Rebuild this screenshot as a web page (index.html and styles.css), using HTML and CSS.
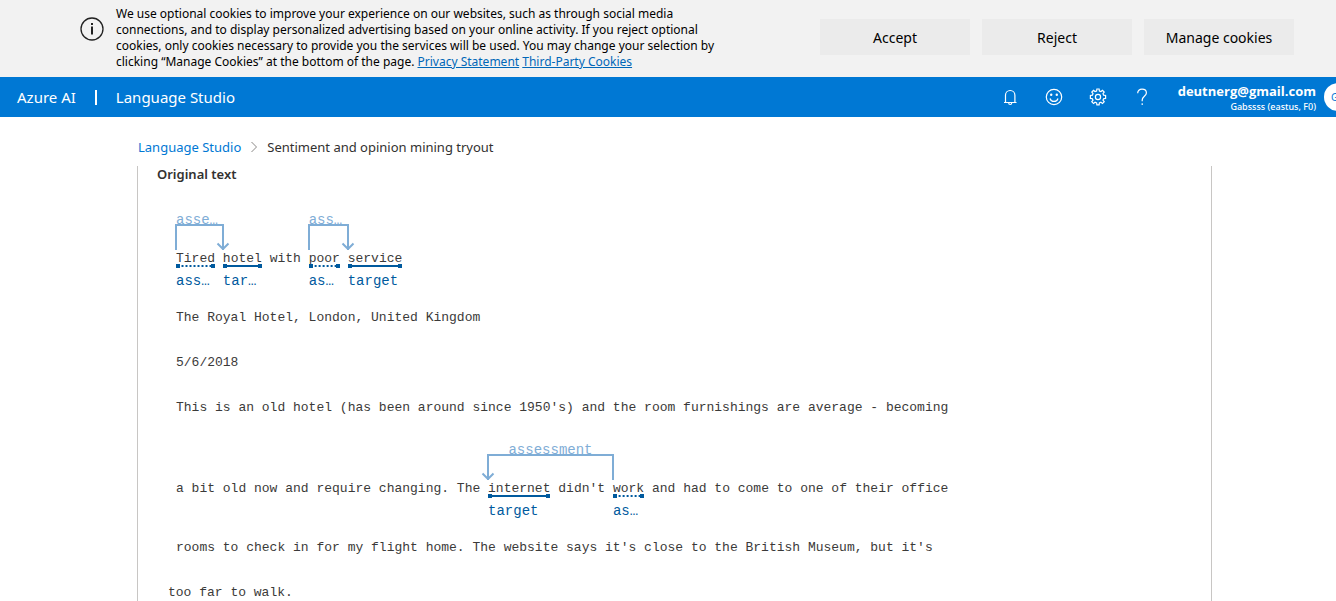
FILE: index.html
```
<!DOCTYPE html>
<html lang="en">
<head>
<meta charset="utf-8">
<title>Sentiment and opinion mining tryout - Language Studio</title>
<link rel="stylesheet" href="styles.css">
</head>
<body>
<section class="cookies" aria-label="Cookie consent">
  <svg class="cookies-icon" viewBox="0 0 24 24" aria-hidden="true"><circle cx="12" cy="12" r="11" fill="none" stroke="#222" stroke-width="1.3"/><path d="M11 6h2v2h-2zM11 9.500h2v8h-2z" fill="#222"/></svg>
  <p class="cookies-text">We use optional cookies to improve your experience on our websites, such as through social media<br>connections, and to display personalized advertising based on your online activity. If you reject optional<br>cookies, only cookies necessary to provide you the services will be used. You may change your selection by<br>clicking “Manage Cookies” at the bottom of the page. <a href="#privacy">Privacy Statement</a> <a href="#third-party">Third-Party Cookies</a></p>
  <div class="cookies-actions">
    <button type="button">Accept</button>
    <button type="button">Reject</button>
    <button type="button">Manage cookies</button>
  </div>
</section>

<header class="topbar">
  <a class="brand" href="#azure">Azure AI</a>
  <span class="divider"></span>
  <a class="product" href="#studio">Language Studio</a>
  <div class="tools">
    <button type="button" aria-label="Notifications"><svg viewBox="0 0 18 18"><path d="M3 14.500H15.500M4.500 14.500V7.200a4.700 4.700 0 0 1 9.400 0V14.500M7.700 15a1.500 1.500 0 0 0 3 0"/></svg></button>
    <button type="button" aria-label="Feedback"><svg viewBox="0 0 18 18"><circle cx="9" cy="9" r="7.700"/><path d="M5 10.500a4.200 4.200 0 0 0 8 0"/><circle class="solid" cx="6.200" cy="6.800" r="1.200"/><circle class="solid" cx="11.800" cy="6.800" r="1.200"/></svg></button>
    <button type="button" aria-label="Settings"><svg viewBox="0 0 18 18"><path d="M7.900 1h2.200l.3 2 1.500.6 1.600-1.200 1.700 1.700L14 5.700l.6 1.500 2 .3v2.900l-2 .3-.6 1.500 1.200 1.600-1.700 1.700-1.600-1.200-1.500.6-.3 2H7.900l-.3-2-1.500-.6-1.600 1.200-1.700-1.700L4 12.200l-.6-1.500-2-.3V7.500l2-.3L4 5.700 2.800 4.100l1.700-1.700 1.600 1.200L7.600 3z"/><circle cx="9" cy="9" r="2.600"/></svg></button>
    <button type="button" aria-label="Help"><svg viewBox="0 0 18 18"><path d="M4.700 5.300C4.700 2.800 6.500 1.200 9 1.200s4.400 1.500 4.400 3.800C13.400 8.200 9.200 8.500 9.200 12v1.200"/><path d="M9.200 15.300v1.600"/></svg></button>
  </div>
  <div class="account">
    <strong>deutnerg@gmail.com</strong>
    <small>Gabssss (eastus, F0)</small>
  </div>
  <div class="avatar">G</div>
</header>

<main>
  <nav class="crumbs" aria-label="Breadcrumb">
    <a href="#studio">Language Studio</a>
    <svg viewBox="0 0 8 12" aria-hidden="true"><path d="M1.500 1l5 5-5 5"/></svg>
    <span>Sentiment and opinion mining tryout</span>
  </nav>
  <article class="panel">
    <h2>Original text</h2>
    <div class="document">
      <p class="line annotated"><span class="relation forward"><span class="arc"><svg class="head" viewBox="0 0 14 8"><path d="M1.500 1.500L7 7l5.500-5.500"/></svg></span><span class="arc-label">asse…</span><span class="token assessment">Tired<span class="tag">ass…</span></span> </span><span class="token target">hotel<span class="tag">tar…</span></span> with <span class="relation forward"><span class="arc"><svg class="head" viewBox="0 0 14 8"><path d="M1.500 1.500L7 7l5.500-5.500"/></svg></span><span class="arc-label">ass…</span><span class="token assessment">poor<span class="tag">as…</span></span> </span><span class="token target">service<span class="tag">target</span></span></p>
      <p class="line">The Royal Hotel, London, United Kingdom</p>
      <p class="line">5/6/2018</p>
      <p class="line">This is an old hotel (has been around since 1950's) and the room furnishings are average - becoming</p>
      <p class="line annotated">a bit old now and require changing. The <span class="relation backward"><span class="arc"><svg class="head" viewBox="0 0 14 8"><path d="M1.500 1.500L7 7l5.500-5.500"/></svg></span><span class="arc-label">assessment</span><span class="token target">internet<span class="tag">target</span></span> didn't </span><span class="token assessment">work<span class="tag">as…</span></span> and had to come to one of their office</p>
      <p class="line">rooms to check in for my flight home. The website says it's close to the British Museum, but it's</p>
      <p class="line last">too far to walk.</p>
    </div>
  </article>
</main>
</body>
</html>
```
FILE: styles.css
```
* { box-sizing: border-box; }

body {
  margin: 0;
  background: #fff;
  color: #323130;
  font-family: "Noto Sans", "Open Sans", sans-serif;
  font-size: 14px;
  overflow: hidden;
}

p, h2 { margin: 0; }
button { border: 0; padding: 0; font: inherit; cursor: pointer; }

/* Cookie banner */
.cookies {
  display: flex;
  align-items: flex-start;
  padding: 6px 42px 7px 80px;
  background: #f2f2f2;
  color: #000;
}
.cookies-icon { width: 24px; height: 24px; margin: 11px 12px 0 0; flex: none; }
.cookies-text { font-size: 12px; line-height: 16px; white-space: nowrap; }
.cookies-text a { color: #0067b8; }
.cookies-actions { display: flex; gap: 12px; margin: 13px 0 0 auto; }
.cookies-actions button {
  width: 150px;
  height: 36px;
  background: #ebebeb;
  color: #000;
  font-size: 14px;
}

/* Top bar */
.topbar {
  display: flex;
  align-items: center;
  height: 40px;
  padding-left: 17px;
  background: #0078d4;
  color: #fff;
}
.topbar a { color: #fff; text-decoration: none; font-size: 15px; line-height: 20px; }
.divider { width: 2px; height: 15px; margin: 0 19px; background: #fff; }
.tools { display: flex; margin-left: auto; }
.tools button {
  display: grid;
  place-items: center;
  width: 44px;
  height: 40px;
  background: none;
}
.tools svg { width: 18px; height: 18px; fill: none; stroke: #fff; stroke-width: 1.2; }
.tools .solid { fill: #fff; stroke: none; }
.account { display: flex; flex-direction: column; align-items: flex-end; width: 152px; padding-top: 1px; }
.account strong { font-family: "Open Sans", sans-serif; font-size: 13px; line-height: 18px; }
.account small { font-size: 9px; line-height: 14px; font-weight: 500; }
.avatar {
  width: 28px;
  height: 28px;
  margin: 0 -16px 0 8px;
  padding-left: 7px;
  border-radius: 50%;
  background: #fff;
  color: #0078d4;
  font-size: 10px;
  line-height: 28px;
}

/* Page */
main { padding: 19px 124px 0 137px; }
.crumbs { display: flex; align-items: center; gap: 9px; height: 22px; padding-left: 1px; font-size: 13px; }
.crumbs a { color: #0078d4; text-decoration: none; }
.crumbs svg { width: 8px; height: 12px; fill: none; stroke: #8a8886; }
.panel {
  margin-top: 8px;
  padding-left: 19px;
  border: solid #c8c6c4;
  border-width: 0 1px;
}
h2 { font-size: 13px; line-height: 17px; font-weight: 600; }

/* Annotated document */
.document {
  padding: 17px 0 0 11px;
  font-family: "Liberation Mono", monospace;
  font-size: 13px;
  color: #3b3a39;
}
.line { padding-left: 8px; line-height: 45px; white-space: pre; }
.line.annotated { padding-top: 36px; padding-bottom: 14px; }
.line.last { padding-left: 0; }

.token, .relation { position: relative; display: inline-block; }
.token::after {
  content: "";
  position: absolute;
  left: 0;
  right: 0;
  top: 28px;
  height: 4px;
  background:
    linear-gradient(#005a9e, #005a9e) left / 4px 4px no-repeat,
    linear-gradient(#005a9e, #005a9e) right / 4px 4px no-repeat,
    linear-gradient(#005a9e, #005a9e) center / 100% 2px no-repeat;
}
.token.assessment::after {
  background:
    linear-gradient(#005a9e, #005a9e) left / 4px 4px no-repeat,
    linear-gradient(#005a9e, #005a9e) right / 4px 4px no-repeat,
    linear-gradient(90deg, #005a9e 60%, transparent 60%) center / 4px 2px repeat-x;
}
.tag, .arc-label {
  position: absolute;
  left: 0;
  font-size: 14px;
  line-height: 18px;
  color: #005a9e;
}
.tag { top: 36px; }
.arc-label { top: -25px; right: 0; color: #7fadd6; }
.backward .arc-label { text-align: center; }
.arc {
  position: absolute;
  left: -1px;
  right: -1px;
  top: -12px;
  height: 26px;
  border: solid #7fadd6;
  border-width: 2px 2px 0;
}
.head {
  position: absolute;
  bottom: 0;
  width: 14px;
  height: 8px;
  fill: none;
  stroke: #7fadd6;
  stroke-width: 2;
}
.forward .head { right: -8px; }
.backward .head { left: -8px; }
```
